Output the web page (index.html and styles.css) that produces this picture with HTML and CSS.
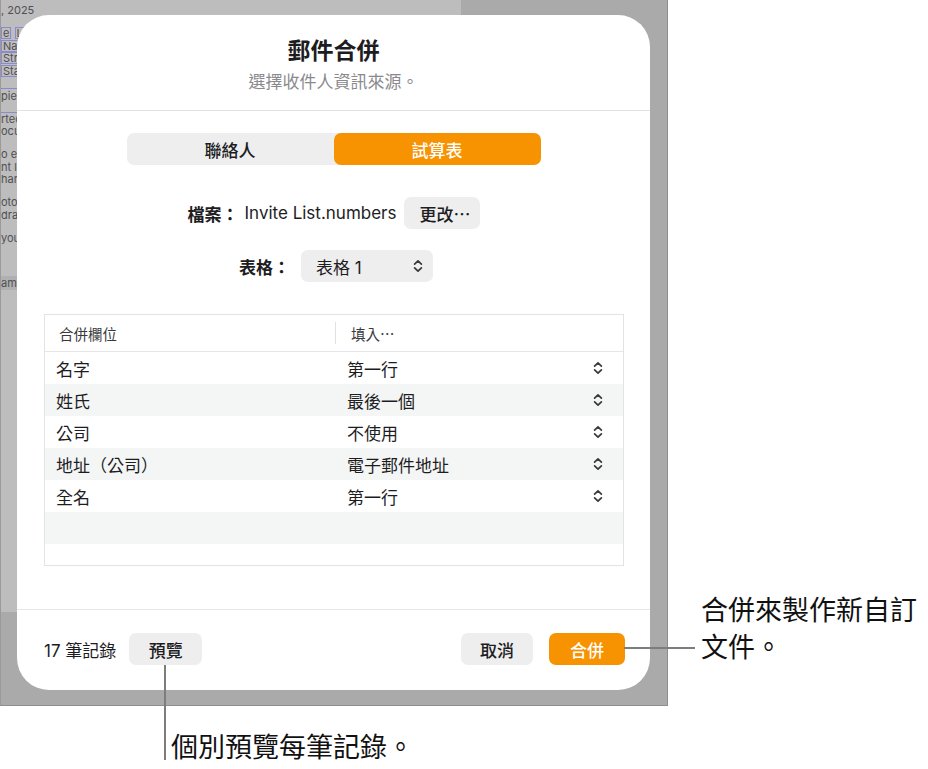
FILE: index.html
```html
<!DOCTYPE html>
<html lang="zh-Hant">
<head>
<meta charset="utf-8">
<title>郵件合併</title>
<link rel="stylesheet" href="styles.css">
</head>
<body>
<div class="canvas">
  <div class="shot">
    <div class="doc">
      <div class="dl">, 2025</div>
      <div class="p">
        <div class="dl"><span class="tok">e</span> <span class="tok">Las</span></div>
        <div class="dl"><span class="tok">Nar</span></div>
        <div class="dl"><span class="tok">Stre</span></div>
        <div class="dl"><span class="tok">Stat</span></div>
      </div>
      <div class="p box"><div class="dl">pier</div></div>
      <div class="dl">rted</div>
      <div class="dl">ocu</div>
      <div class="p">
        <div class="dl">o ed</div>
        <div class="dl">nt l</div>
        <div class="dl">hang</div>
      </div>
      <div class="p">
        <div class="dl">otos</div>
        <div class="dl">dra</div>
      </div>
      <div class="p"><div class="dl">you</div></div>
      <div class="band"><div class="dl">ame</div></div>
    </div>

    <section class="dialog">
      <header class="dhead">
        <h1 class="title">郵件合併</h1>
        <p class="subtitle">選擇收件人資訊來源。</p>
      </header>
      <div class="dbody">
        <div class="seg">
          <div class="seg-item">聯絡人</div>
          <div class="seg-item on">試算表</div>
        </div>
        <div class="frow">
          <span class="lbl">檔案：</span>
          <span class="fname">Invite List.numbers</span>
          <span class="btn change">更改⋯</span>
        </div>
        <div class="frow second">
          <span class="lbl">表格：</span>
          <span class="popup"><span>表格 1</span>
            <svg class="chev" viewBox="0 0 10 14" width="10" height="14"><path d="M1.6 5.2 L5 1.8 L8.4 5.2 M1.6 8.8 L5 12.2 L8.4 8.8"/></svg>
          </span>
        </div>
        <div class="table">
          <div class="thead">
            <div class="th">合併欄位</div>
            <div class="th th2">填入⋯</div>
          </div>
          <div class="tr"><div class="td">名字</div><div class="td td2"><span>第一行</span><svg class="chev" viewBox="0 0 10 14" width="10" height="14"><path d="M1.6 5.2 L5 1.8 L8.4 5.2 M1.6 8.8 L5 12.2 L8.4 8.8"/></svg></div></div>
          <div class="tr alt"><div class="td">姓氏</div><div class="td td2"><span>最後一個</span><svg class="chev" viewBox="0 0 10 14" width="10" height="14"><path d="M1.6 5.2 L5 1.8 L8.4 5.2 M1.6 8.8 L5 12.2 L8.4 8.8"/></svg></div></div>
          <div class="tr"><div class="td">公司</div><div class="td td2"><span>不使用</span><svg class="chev" viewBox="0 0 10 14" width="10" height="14"><path d="M1.6 5.2 L5 1.8 L8.4 5.2 M1.6 8.8 L5 12.2 L8.4 8.8"/></svg></div></div>
          <div class="tr alt"><div class="td">地址（公司）</div><div class="td td2"><span>電子郵件地址</span><svg class="chev" viewBox="0 0 10 14" width="10" height="14"><path d="M1.6 5.2 L5 1.8 L8.4 5.2 M1.6 8.8 L5 12.2 L8.4 8.8"/></svg></div></div>
          <div class="tr"><div class="td">全名</div><div class="td td2"><span>第一行</span><svg class="chev" viewBox="0 0 10 14" width="10" height="14"><path d="M1.6 5.2 L5 1.8 L8.4 5.2 M1.6 8.8 L5 12.2 L8.4 8.8"/></svg></div></div>
          <div class="tr alt"></div>
          <div class="tr rest"></div>
        </div>
      </div>
      <footer class="dfoot">
        <span class="count">17 筆記錄</span>
        <span class="btn preview">預覽</span>
        <span class="spacer"></span>
        <span class="btn cancel">取消</span>
        <span class="btn merge">合併</span>
      </footer>
    </section>
  </div>

  <div class="vline"></div>
  <div class="hline"></div>
  <p class="note note-right">合併來製作新自訂<br>文件。</p>
  <p class="note note-bottom">個別預覽每筆記錄。</p>
</div>
</body>
</html>
```

FILE: styles.css
```css
* { box-sizing: border-box; }
html, body { margin: 0; padding: 0; background: #ffffff; }
body {
  width: 928px;
  height: 769px;
  overflow: hidden;
  font-family: Inter, "Noto Sans CJK TC", "Noto Sans", sans-serif;
  color: #1d1d1f;
}
.canvas { position: relative; width: 928px; height: 769px; }

/* background screenshot frame */
.shot {
  position: relative;
  width: 668px;
  height: 706px;
  background: #aaaaaa;
  border-left: 1px solid #9a9a9a;
  border-right: 1px solid #8e8e8e;
  border-bottom: 1px solid #8e8e8e;
  overflow: hidden;
}
.doc {
  width: 460px;
  height: 612px;
  background: #bdbdbd;
  padding-top: 4px;
  color: #4f4f55;
  font-size: 11px;
  overflow: hidden;
}
.dl { line-height: 12.5px; height: 12.5px; white-space: nowrap; overflow: hidden; }
.p { margin-top: 10.5px; }
.tok {
  border: 1px solid #8a8ad0;
  padding: 0 1px;
  line-height: 10px;
  display: inline-block;
}
.box {
  border-top: 1px solid #8a8ad0;
  border-bottom: 1px solid #8a8ad0;
  height: 25px;
  padding-top: 1px;
}
.band {
  margin-top: 32px;
  background: #b0b0b0;
  height: 14px;
  padding-top: 1px;
}

/* dialog */
.dialog {
  position: absolute;
  left: 16px;
  top: 15px;
  width: 633px;
  height: 675px;
  background: #ffffff;
  border-radius: 32px;
  display: flex;
  flex-direction: column;
}
.dhead {
  height: 96px;
  border-bottom: 1px solid #e2e2e4;
  text-align: center;
  padding-top: 22px;
}
.title {
  margin: 0;
  font-size: 23px;
  line-height: 28px;
  font-weight: 700;
  color: #1d1d1f;
}
.subtitle {
  margin: 6px 0 0;
  font-size: 17px;
  line-height: 22px;
  color: #8a8a8e;
}
.dbody {
  padding: 22px 26px 0 27px;
  display: flex;
  flex-direction: column;
  align-items: center;
}
.seg {
  width: 414px;
  height: 32px;
  display: flex;
  background: #eeeeef;
  border-radius: 7px;
  margin-left: -1px;
}
.seg-item {
  flex: 1;
  display: flex;
  align-items: center;
  justify-content: center;
  font-size: 17px;
  font-weight: 500;
  color: #1d1d1f;
  border-radius: 7px;
}
.seg-item.on { background: #f79200; color: #ffffff; }

.frow {
  margin-top: 32px;
  height: 32px;
  display: flex;
  align-items: center;
  font-size: 17px;
}
.frow.second { margin-top: 21px; margin-left: 4px; }
.lbl { font-weight: 700; margin-right: 6px; }
.frow.second .lbl { margin-right: 11px; }
.fname { margin-right: 8px; color: #1d1d1f; }
.btn {
  display: inline-flex;
  align-items: center;
  justify-content: center;
  height: 32px;
  border-radius: 7px;
  background: #eeeeef;
  font-size: 17px;
  font-weight: 500;
  color: #1d1d1f;
}
.change { padding: 0 10px 0 15px; }
.popup {
  width: 132px;
  height: 32px;
  border-radius: 7px;
  background: #eeeeef;
  display: flex;
  align-items: center;
  justify-content: space-between;
  padding: 0 10px 0 15px;
  font-size: 17px;
}
.chev { display: block; }
.chev path {
  fill: none;
  stroke: #3a3a3c;
  stroke-width: 1.7;
  stroke-linecap: round;
  stroke-linejoin: round;
}

.table {
  margin-top: 32px;
  width: 580px;
  height: 252px;
  border: 1px solid #e3e3e5;
  display: flex;
  flex-direction: column;
  font-size: 17px;
}
.thead {
  height: 37px;
  flex: none;
  display: grid;
  grid-template-columns: 290px 1fr;
  align-items: center;
  border-bottom: 1px solid #e6e6e8;
  font-size: 14.5px;
  color: #3a3a3c;
}
.th { padding-left: 14px; }
.th2 {
  height: 22px;
  display: flex;
  align-items: center;
  border-left: 1px solid #e0e0e2;
  padding-left: 15px;
}
.tr {
  height: 32px;
  flex: none;
  display: grid;
  grid-template-columns: 290px 1fr;
  align-items: center;
}
.tr.alt { background: #f4f5f5; }
.tr.rest { flex: 1; }
.td { padding-left: 11px; }
.td2 {
  display: flex;
  align-items: center;
  justify-content: space-between;
  padding-left: 12px;
  padding-right: 20px;
}

.dfoot {
  margin-top: auto;
  border-top: 1px solid #e6e6e8;
  padding: 23px 25px 25px 27px;
  display: flex;
  align-items: center;
  height: 81px;
}
.count { font-size: 17px; font-weight: 400; color: #1d1d1f; margin-right: 13px; }
.preview { width: 73px; }
.spacer { flex: 1; }
.cancel { width: 72px; margin-right: 16px; }
.merge { width: 76px; background: #f79200; color: #ffffff; font-weight: 500; }

/* callouts */
.vline {
  position: absolute;
  left: 164px;
  top: 665px;
  width: 2px;
  height: 95px;
  background: #7d7d7d;
}
.hline {
  position: absolute;
  left: 624px;
  top: 647px;
  width: 71px;
  height: 2px;
  background: #7d7d7d;
}
.note {
  position: absolute;
  margin: 0;
  font-size: 27px;
  line-height: 37px;
  font-weight: 400;
  color: #111111;
  white-space: nowrap;
}
.note-right { left: 701px; top: 592px; }
.note-bottom { left: 171px; top: 729px; }
```
